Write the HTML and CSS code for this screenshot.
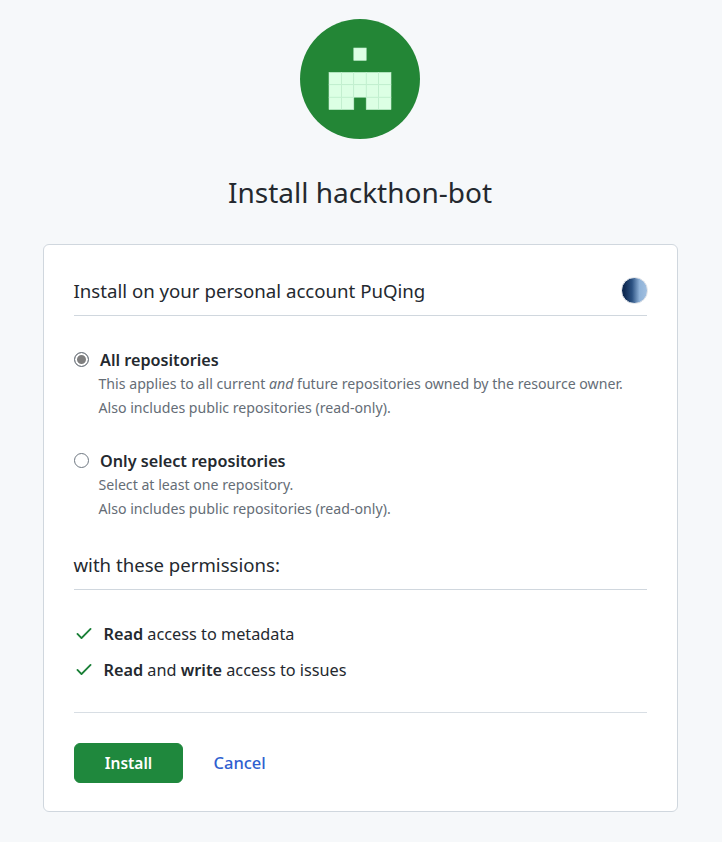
FILE: index.html
```html
<!DOCTYPE html>
<html lang="en">
<head>
<meta charset="UTF-8" />
<meta name="viewport" content="width=device-width, initial-scale=1" />
<title>Install hackthon-bot</title>
<link rel="stylesheet" href="styles.css">
</head>
<body>

<div class="page">
  <svg class="logo" width="120" height="120" viewBox="0 0 120 120">
    <circle cx="60" cy="60" r="60" fill="#238636" />
    <g fill="#dcffe4" stroke="#c2efd0" stroke-width="0.6">
      <rect x="53.8" y="29" width="12.4" height="12.4" />
      <rect x="29" y="53.4" width="12.4" height="12.4" />
      <rect x="41.4" y="53.4" width="12.4" height="12.4" />
      <rect x="53.8" y="53.4" width="12.4" height="12.4" />
      <rect x="66.2" y="53.4" width="12.4" height="12.4" />
      <rect x="78.6" y="53.4" width="12.4" height="12.4" />
      <rect x="29" y="65.8" width="12.4" height="12.4" />
      <rect x="41.4" y="65.8" width="12.4" height="12.4" />
      <rect x="53.8" y="65.8" width="12.4" height="12.4" />
      <rect x="66.2" y="65.8" width="12.4" height="12.4" />
      <rect x="78.6" y="65.8" width="12.4" height="12.4" />
      <rect x="29" y="78.2" width="12.4" height="12.4" />
      <rect x="41.4" y="78.2" width="12.4" height="12.4" />
      <rect x="66.2" y="78.2" width="12.4" height="12.4" />
      <rect x="78.6" y="78.2" width="12.4" height="12.4" />
    </g>
  </svg>

  <h1 class="title">Install hackthon-bot</h1>

  <div class="card">
    <div class="section-head account-head">
      <span>Install on your personal account PuQing</span>
      <span class="avatar"></span>
    </div>

    <div class="option option-first">
      <div class="option-label">
        <span class="radio checked"></span>
        <strong>All repositories</strong>
      </div>
      <p class="note">This applies to all current <em>and</em> future repositories owned by the resource owner.</p>
      <p class="note">Also includes public repositories (read-only).</p>
    </div>

    <div class="option">
      <div class="option-label">
        <span class="radio"></span>
        <strong>Only select repositories</strong>
      </div>
      <p class="note">Select at least one repository.</p>
      <p class="note">Also includes public repositories (read-only).</p>
    </div>

    <div class="section-head perms-head">with these permissions:</div>

    <ul class="perms">
      <li>
        <svg class="check" width="20" height="20" viewBox="0 0 16 16"><path fill="#1a7f37" d="M13.78 4.22a.75.75 0 0 1 0 1.06l-7.25 7.25a.75.75 0 0 1-1.06 0L2.22 9.28a.75.75 0 0 1 1.06-1.06L6 10.94l6.72-6.72a.75.75 0 0 1 1.06 0Z" /></svg>
        <span><strong>Read</strong> access to metadata</span>
      </li>
      <li>
        <svg class="check" width="20" height="20" viewBox="0 0 16 16"><path fill="#1a7f37" d="M13.78 4.22a.75.75 0 0 1 0 1.06l-7.25 7.25a.75.75 0 0 1-1.06 0L2.22 9.28a.75.75 0 0 1 1.06-1.06L6 10.94l6.72-6.72a.75.75 0 0 1 1.06 0Z" /></svg>
        <span><strong>Read</strong> and <strong>write</strong> access to issues</span>
      </li>
    </ul>

    <div class="actions">
      <button class="install">Install</button>
      <a class="cancel" href="#">Cancel</a>
    </div>
  </div>
</div>

</body>
</html>
```

FILE: styles.css
```css
body {
  margin: 0;
  background: #f6f8fa;
  color: #24292f;
  font-family: "Noto Sans", "Open Sans", sans-serif;
}
.page {
  display: flex;
  flex-direction: column;
  align-items: center;
  padding: 19px 2px 0 0;
}
.logo {
  display: block;
}
.title {
  margin: 34px 0 33px;
  font-size: 28px;
  line-height: 38px;
  font-weight: 400;
}
.card {
  box-sizing: border-box;
  width: 635px;
  height: 568px;
  padding: 0 30px;
  background: #fff;
  border: 1px solid #d0d7de;
  border-radius: 6px;
}
.section-head {
  display: flex;
  justify-content: space-between;
  align-items: center;
  font-size: 18.6px;
  border-bottom: 1px solid #d0d7de;
}
.account-head {
  height: 71px;
  padding-top: 21px;
  box-sizing: border-box;
  font-size: 18.65px;
}
.avatar {
  width: 27px;
  height: 27px;
  margin-right: -1px;
  border-radius: 50%;
  border: 1px solid #dfe3e8;
  box-sizing: border-box;
  background: linear-gradient(90deg, #0f2a52 10%, #2c5282 40%, #8fb2d8 70%, #a2c0e0);
}
.option {
  margin-top: 30px;
}
.option-first {
  margin-top: 32px;
}
.option-label {
  display: flex;
  align-items: center;
  gap: 11px;
  font-size: 16.2px;
  line-height: 24px;
}
.option-label strong {
  font-weight: 600;
  margin-left: 0.5px;
}
.radio {
  box-sizing: border-box;
  width: 15px;
  height: 15px;
  margin-top: -2px;
  border: 1px solid #6e7781;
  border-radius: 50%;
  background: #fff;
}
.radio.checked {
  background: #7f7f7f;
  box-shadow: inset 0 0 0 2px #fff;
}
.note {
  margin: 0 0 0 25px;
  font-size: 14.15px;
  line-height: 23.5px;
  color: #656d76;
}
.perms-head {
  height: 50px;
  margin-top: 20px;
  align-items: flex-start;
  padding-top: 12px;
  box-sizing: border-box;
}
.perms {
  list-style: none;
  margin: 0;
  padding: 26px 0 24px;
  border-bottom: 1px solid #d8dee4;
}
.perms li {
  display: flex;
  align-items: center;
  gap: 10px;
  font-size: 16.25px;
  line-height: 36px;
}
.perms strong {
  font-weight: 600;
}
.check {
  flex: none;
  margin-top: -3px;
}
.actions {
  display: flex;
  align-items: center;
  gap: 30px;
  margin-top: 30px;
}
.install {
  width: 109px;
  height: 40px;
  padding: 0 0 0 1px;
  border: 1px solid #1f883d;
  border-radius: 6px;
  background: #1f883d;
  color: #fff;
  font-family: inherit;
  font-size: 15.5px;
  font-weight: 600;
  cursor: pointer;
}
.cancel {
  margin: -2px 0 0 1px;
  color: #2f5fd0;
  font-size: 16.5px;
  font-weight: 500;
  text-decoration: none;
}
```
